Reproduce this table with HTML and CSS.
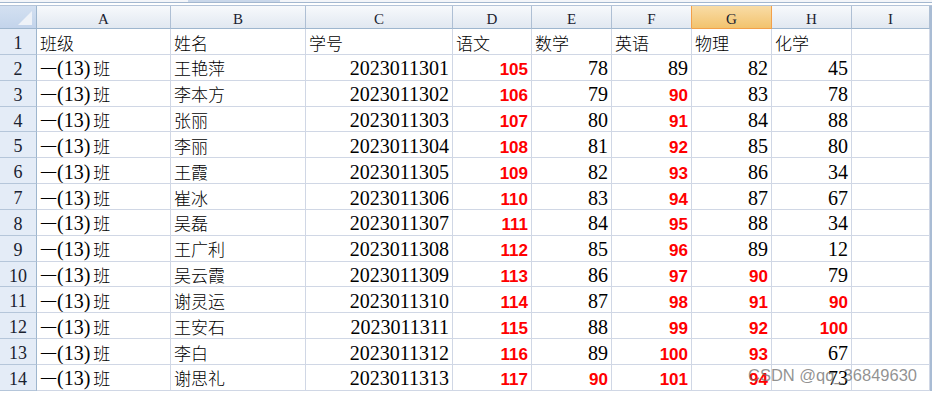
FILE: index.html
```html
<!DOCTYPE html>
<html lang="zh-CN">
<head>
<meta charset="utf-8">
<title>Sheet</title>
<link rel="stylesheet" href="styles.css">
</head>
<body>
<div class="topbar"><div class="tab"></div></div>
<div class="sheet">
  <div class="corner"><svg width="36" height="22" viewBox="0 0 36 22"><polygon points="32,5 32,19 18,19" fill="#eef2f8"/></svg></div>
  <div class="ch">A</div><div class="ch">B</div><div class="ch">C</div><div class="ch">D</div><div class="ch">E</div><div class="ch pre-sel">F</div><div class="ch sel">G</div><div class="ch">H</div><div class="ch">I</div>

  <div class="rh">1</div><div class="c"><span class="zh">班级</span></div><div class="c"><span class="zh">姓名</span></div><div class="c"><span class="zh">学号</span></div><div class="c"><span class="zh">语文</span></div><div class="c"><span class="zh">数学</span></div><div class="c"><span class="zh">英语</span></div><div class="c"><span class="zh">物理</span></div><div class="c"><span class="zh">化学</span></div><div class="c"></div>

  <div class="rh">2</div><div class="c"><span class="zh">一</span>(13)<span class="zh gap">班</span></div><div class="c"><span class="zh">王艳萍</span></div><div class="c r">2023011301</div><div class="c r"><span class="red">105</span></div><div class="c r">78</div><div class="c r">89</div><div class="c r">82</div><div class="c r">45</div><div class="c"></div>

  <div class="rh">3</div><div class="c"><span class="zh">一</span>(13)<span class="zh gap">班</span></div><div class="c"><span class="zh">李本方</span></div><div class="c r">2023011302</div><div class="c r"><span class="red">106</span></div><div class="c r">79</div><div class="c r"><span class="red">90</span></div><div class="c r">83</div><div class="c r">78</div><div class="c"></div>

  <div class="rh">4</div><div class="c"><span class="zh">一</span>(13)<span class="zh gap">班</span></div><div class="c"><span class="zh">张丽</span></div><div class="c r">2023011303</div><div class="c r"><span class="red">107</span></div><div class="c r">80</div><div class="c r"><span class="red">91</span></div><div class="c r">84</div><div class="c r">88</div><div class="c"></div>

  <div class="rh">5</div><div class="c"><span class="zh">一</span>(13)<span class="zh gap">班</span></div><div class="c"><span class="zh">李丽</span></div><div class="c r">2023011304</div><div class="c r"><span class="red">108</span></div><div class="c r">81</div><div class="c r"><span class="red">92</span></div><div class="c r">85</div><div class="c r">80</div><div class="c"></div>

  <div class="rh">6</div><div class="c"><span class="zh">一</span>(13)<span class="zh gap">班</span></div><div class="c"><span class="zh">王霞</span></div><div class="c r">2023011305</div><div class="c r"><span class="red">109</span></div><div class="c r">82</div><div class="c r"><span class="red">93</span></div><div class="c r">86</div><div class="c r">34</div><div class="c"></div>

  <div class="rh">7</div><div class="c"><span class="zh">一</span>(13)<span class="zh gap">班</span></div><div class="c"><span class="zh">崔冰</span></div><div class="c r">2023011306</div><div class="c r"><span class="red">110</span></div><div class="c r">83</div><div class="c r"><span class="red">94</span></div><div class="c r">87</div><div class="c r">67</div><div class="c"></div>

  <div class="rh">8</div><div class="c"><span class="zh">一</span>(13)<span class="zh gap">班</span></div><div class="c"><span class="zh">吴磊</span></div><div class="c r">2023011307</div><div class="c r"><span class="red">111</span></div><div class="c r">84</div><div class="c r"><span class="red">95</span></div><div class="c r">88</div><div class="c r">34</div><div class="c"></div>

  <div class="rh">9</div><div class="c"><span class="zh">一</span>(13)<span class="zh gap">班</span></div><div class="c"><span class="zh">王广利</span></div><div class="c r">2023011308</div><div class="c r"><span class="red">112</span></div><div class="c r">85</div><div class="c r"><span class="red">96</span></div><div class="c r">89</div><div class="c r">12</div><div class="c"></div>

  <div class="rh">10</div><div class="c"><span class="zh">一</span>(13)<span class="zh gap">班</span></div><div class="c"><span class="zh">吴云霞</span></div><div class="c r">2023011309</div><div class="c r"><span class="red">113</span></div><div class="c r">86</div><div class="c r"><span class="red">97</span></div><div class="c r"><span class="red">90</span></div><div class="c r">79</div><div class="c"></div>

  <div class="rh">11</div><div class="c"><span class="zh">一</span>(13)<span class="zh gap">班</span></div><div class="c"><span class="zh">谢灵运</span></div><div class="c r">2023011310</div><div class="c r"><span class="red">114</span></div><div class="c r">87</div><div class="c r"><span class="red">98</span></div><div class="c r"><span class="red">91</span></div><div class="c r"><span class="red">90</span></div><div class="c"></div>

  <div class="rh">12</div><div class="c"><span class="zh">一</span>(13)<span class="zh gap">班</span></div><div class="c"><span class="zh">王安石</span></div><div class="c r">2023011311</div><div class="c r"><span class="red">115</span></div><div class="c r">88</div><div class="c r"><span class="red">99</span></div><div class="c r"><span class="red">92</span></div><div class="c r"><span class="red">100</span></div><div class="c"></div>

  <div class="rh">13</div><div class="c"><span class="zh">一</span>(13)<span class="zh gap">班</span></div><div class="c"><span class="zh">李白</span></div><div class="c r">2023011312</div><div class="c r"><span class="red">116</span></div><div class="c r">89</div><div class="c r"><span class="red">100</span></div><div class="c r"><span class="red">93</span></div><div class="c r">67</div><div class="c"></div>

  <div class="rh">14</div><div class="c"><span class="zh">一</span>(13)<span class="zh gap">班</span></div><div class="c"><span class="zh">谢思礼</span></div><div class="c r">2023011313</div><div class="c r"><span class="red">117</span></div><div class="c r"><span class="red">90</span></div><div class="c r"><span class="red">101</span></div><div class="c r"><span class="red">94</span></div><div class="c r">73</div><div class="c"></div>
</div>
<div class="watermark">CSDN @qq_36849630</div>
</body>
</html>
```
FILE: styles.css
```css
* { box-sizing: border-box; margin: 0; padding: 0; }
html, body { width: 932px; height: 393px; overflow: hidden; background: #fff; }
body {
  font-family: "Liberation Serif", "Noto Sans CJK SC", serif;
  color: #000;
  position: relative;
}
.topbar {
  height: 6px;
  background: linear-gradient(to bottom, #f3f5f9 0 2px, #a3b7cf 2px 3px, #ffffff 3px 5px, #b4c4d9 5px 6px);
}
.tab {
  margin-left: 188px;
  width: 92px;
  height: 2px;
  background: #c9d7ea;
}
.sheet {
  display: grid;
  width: 932px;
  grid-template-columns: 37px 134px 135px 147px 79px 80px 80px 80px 80px 78px;
  grid-template-rows: 23px;
  grid-auto-rows: 25.85px;
  border-right: 2px solid #a9bcd4;
}
.corner {
  background: linear-gradient(to bottom, #d3e0f1, #c3d4eb);
  border-right: 1px solid #9eb6ce;
  border-bottom: 1px solid #9eb6ce;
}
.corner svg { display: block; }
.ch {
  background: linear-gradient(to bottom, #f7f9fc, #e1e8f1);
  border-right: 1px solid #aebfd4;
  border-bottom: 1px solid #9eb6ce;
  text-align: center;
  font-size: 15px;
  line-height: 1;
  padding-top: 6px;
  color: #1a2230;
}
.ch.pre-sel { border-right-color: #f2a04a; }
.ch.sel {
  background: linear-gradient(to bottom, #f9dca6, #f2c36e);
  border-right-color: #f2a04a;
  border-bottom-color: #f2a04a;
}
.rh {
  background: #e4ecf7;
  border-right: 1px solid #9eb6ce;
  border-bottom: 1px solid #b5c6da;
  text-align: center;
  font-size: 18px;
  line-height: 1;
  padding-top: 5px;
  color: #1a2230;
}
.c {
  border-right: 1px solid #d0d7e5;
  border-bottom: 1px solid #d0d7e5;
  font-size: 20px;
  line-height: 1;
  padding: 3.5px 3px 0 3px;
  white-space: nowrap;
  overflow: hidden;
}
.c.r { text-align: right; }
.zh {
  font-family: "Noto Sans CJK SC", sans-serif;
  font-weight: 300;
  font-size: 17px;
}
.zh.gap { margin-left: 3px; }
.red {
  font-family: "Liberation Sans", Arial, sans-serif;
  font-weight: bold;
  font-size: 17px;
  color: #ff0000;
}
.watermark {
  position: absolute;
  left: 748px;
  top: 367px;
  font-family: "Liberation Sans", Arial, sans-serif;
  font-size: 16.5px;
  line-height: 1;
  color: rgba(110, 110, 110, 0.75);
  white-space: nowrap;
}
```
